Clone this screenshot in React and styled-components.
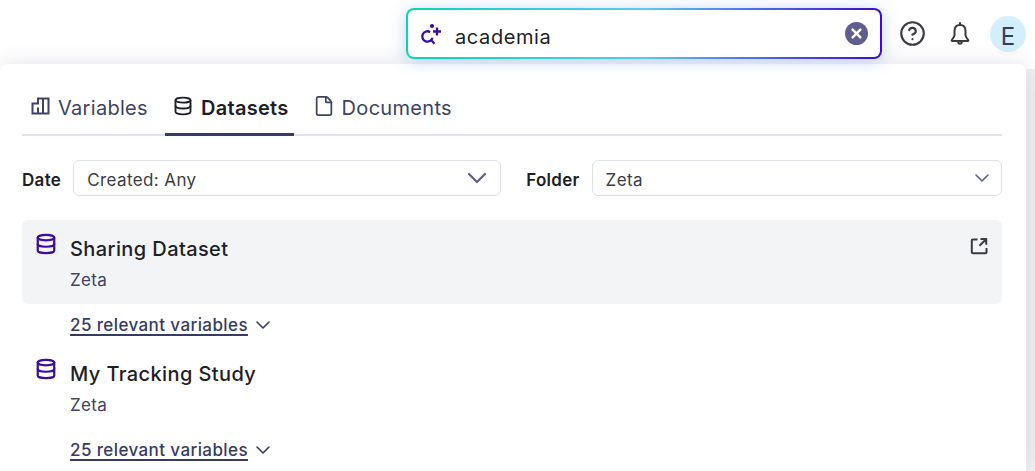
import React from 'react'
import styled, { createGlobalStyle } from 'styled-components'
import { HelpCircle, ChevronDown, Database, File } from 'lucide-react'

const GlobalStyle = createGlobalStyle`
	html, body {
		margin: 0;
		padding: 0;
		height: 100%;
		overflow: hidden;
		background: #ffffff;
		font-family: Inter, "Liberation Sans", sans-serif;
	}
`

const VariablesIcon = () => (
	<svg width="20" height="20" viewBox="0 0 20 20" fill="none" stroke="currentColor" strokeWidth="2">
		<path d="M2.5 17.5V7.5H8V2.5H18.5V17.5Z" />
		<path d="M13 2.5V17.5M8 11.5V17.5" />
	</svg>
)

const SparkSearchIcon = () => (
	<svg width="24" height="24" viewBox="0 0 24 24" fill="none" stroke="#3a0ca3" strokeWidth="2.3">
		<path d="M10.1 10A5.2 5.2 0 1 0 12.5 15.8" />
		<path d="M11.3 18.3l3.2 3.4" />
		<path d="M17 5.5v8M13 9.5h8" />
		<circle cx="12" cy="4" r="2.1" fill="#3a0ca3" stroke="none" />
	</svg>
)

const BellIcon = () => (
	<svg width="24" height="24" viewBox="0 0 24 24" fill="none" stroke="#3a3a3f" strokeWidth="2" strokeLinecap="round" strokeLinejoin="round">
		<path d="M12 1v2" />
		<path d="M12 3c-3.6 0-5.5 2.6-5.5 6v4c0 1.8-1.6 3.2-2.8 5.2-.2.4 0 .8.5.8h15.6c.5 0 .7-.4.5-.8-1.2-2-2.8-3.4-2.8-5.2V9c0-3.4-1.9-6-5.5-6z" />
		<path d="M10 19.5c.3 1.5 1 2.2 2 2.2s1.7-.7 2-2.2" />
	</svg>
)

const OpenIcon = () => (
	<svg width="18" height="18" viewBox="0 0 18 18" fill="none" stroke="currentColor" strokeWidth="2">
		<path d="M7.5 2.5H2.8a1 1 0 0 0-1 1V15.2a1 1 0 0 0 1 1H15.5a1 1 0 0 0 1-1V11" />
		<path d="M10.5 2H16.2V7.7M16 2.2L9.5 8.7" />
	</svg>
)

const ResultItem = ({ title, highlighted }) => (
	<section>
		<ResultCard $highlighted={highlighted}>
			<ResultIcon>
				<Database size={22} strokeWidth={2.4} />
			</ResultIcon>
			<ResultBody>
				<ResultTitle>{title}</ResultTitle>
				<ResultFolder>Zeta</ResultFolder>
			</ResultBody>
			{highlighted && (
				<OpenLink>
					<OpenIcon />
				</OpenLink>
			)}
		</ResultCard>
		<RelevantRow>
			<RelevantLink>25 relevant variables</RelevantLink>
			<ChevronDown size={24} strokeWidth={1.6} />
		</RelevantRow>
	</section>
)

const App = () => {
	return (
		<Page>
			<GlobalStyle />
			<Header>
				<SearchBorder>
					<SearchBox>
						<SparkSearchIcon />
						<SearchText>academia</SearchText>
						<ClearButton>
							<svg width="11" height="11" viewBox="0 0 10 10" stroke="#fff" strokeWidth="2.2" strokeLinecap="round">
								<path d="M1.5 1.5l7 7M8.5 1.5l-7 7" />
							</svg>
						</ClearButton>
					</SearchBox>
				</SearchBorder>
				<HeaderIcon>
					<HelpCircle size={27} strokeWidth={1.9} />
				</HeaderIcon>
				<HeaderIcon>
					<BellIcon />
				</HeaderIcon>
				<Avatar>E</Avatar>
			</Header>

			<Content>
				<Panel>
					<Tabs>
						<Tab>
							<VariablesIcon />
							Variables
						</Tab>
						<Tab $active>
							<Database size={20} strokeWidth={2.2} />
							Datasets
						</Tab>
						<Tab>
							<DocumentIcon size={22} strokeWidth={1.9} />
							Documents
						</Tab>
					</Tabs>

					<Filters>
						<FilterLabel>Date</FilterLabel>
						<DateSelect>
							<SelectValue>Created: Any</SelectValue>
							<ChevronDown size={32} strokeWidth={1.6} />
						</DateSelect>
						<FilterLabel>Folder</FilterLabel>
						<FolderSelect>
							<SelectValue>Zeta</SelectValue>
							<ChevronDown size={24} strokeWidth={1.6} />
						</FolderSelect>
					</Filters>

					<ResultItem title="Sharing Dataset" highlighted />
					<ResultItem title="My Tracking Study" />
				</Panel>
				<ScrollTrack />
			</Content>
		</Page>
	)
}

const Page = styled.div`
	width: 1035px;
	height: 471px;
	overflow: hidden;
	display: flex;
	flex-direction: column;
	background: #ffffff;
`

const Header = styled.header`
	height: 64px;
	flex-shrink: 0;
	display: flex;
	align-items: flex-start;
	padding: 8px 9px 0 406px;
	box-sizing: border-box;
`

const SearchBorder = styled.div`
	width: 476px;
	height: 51px;
	margin-right: 6px;
	box-sizing: border-box;
	padding: 2px;
	border-radius: 8px;
	background: linear-gradient(90deg, #06d6b0 0%, #5cc8f5 50%, #3a0ccf 100%);
	box-shadow: 0 2px 16px rgba(80, 130, 230, 0.35);
	position: relative;
	z-index: 2;
`

const SearchBox = styled.div`
	height: 100%;
	display: flex;
	align-items: center;
	padding: 0 12px;
	border-radius: 6px;
	background: #ffffff;
`

const SearchText = styled.span`
	flex: 1;
	margin-left: 11px;
	padding-top: 6px;
	font-size: 20px;
	letter-spacing: 0.6px;
	color: #1d1e26;
`

const ClearButton = styled.div`
	width: 23px;
	height: 23px;
	border-radius: 50%;
	background: #5f5f8f;
	display: flex;
	align-items: center;
	justify-content: center;
`

const HeaderIcon = styled.div`
	width: 48px;
	height: 51px;
	display: flex;
	align-items: center;
	justify-content: center;
	color: #3a3a3f;
`

const Avatar = styled.div`
	width: 36px;
	height: 36px;
	margin: 8px 0 0 6px;
	padding-top: 4px;
	box-sizing: border-box;
	border-radius: 50%;
	background: #d3eefd;
	color: #35395f;
	font-size: 24px;
	display: flex;
	align-items: center;
	justify-content: center;
`

const Content = styled.div`
	flex: 1;
	display: flex;
	min-height: 0;
`

const Panel = styled.main`
	width: 1026px;
	flex-shrink: 0;
	box-sizing: border-box;
	padding: 20px 24px 0 22px;
	background: #ffffff;
	border-radius: 8px 8px 0 0;
	box-shadow: 0 0 22px rgba(50, 50, 90, 0.14);
	position: relative;
`

const ScrollTrack = styled.div`
	flex: 1;
	margin-top: 5px;
	background: #f1f1f3;
`

const Tabs = styled.nav`
	display: flex;
	height: 52px;
	box-sizing: border-box;
	border-bottom: 2px solid #e2e2ea;
`

const Tab = styled.div`
	height: 52px;
	box-sizing: border-box;
	padding: 0 5px 1px 8px;
	margin-right: 12px;
	display: flex;
	align-items: center;
	gap: 8px;
	font-size: 20px;
	letter-spacing: 0.3px;
	font-weight: ${(p) => (p.$active ? 600 : 400)};
	color: ${(p) => (p.$active ? '#1d1e26' : '#3d4266')};
	border-bottom: 3px solid ${(p) => (p.$active ? '#363b63' : 'transparent')};

	svg {
		margin-top: -4px;
		flex-shrink: 0;
	}
`

const DocumentIcon = styled(File)`
	&& {
		margin: -4px -1px 0 -1px;
	}
`

const Filters = styled.div`
	display: flex;
	align-items: center;
	margin: 24px 0;
`

const FilterLabel = styled.label`
	font-size: 17px;
	font-weight: 600;
	letter-spacing: 0.3px;
	color: #1d1e26;
	padding-top: 4px;
	margin-right: 12px;
`

const DateSelect = styled.div`
	width: 428px;
	height: 36px;
	margin-right: 25px;
	box-sizing: border-box;
	display: flex;
	align-items: center;
	justify-content: space-between;
	padding: 0 7px 0 13px;
	background: #ffffff;
	border: 1px solid #dfdfe8;
	border-radius: 6px;
	color: #5a5f8a;
`

const FolderSelect = styled(DateSelect)`
	width: 410px;
	margin-right: 0;
`

const SelectValue = styled.span`
	font-size: 17px;
	letter-spacing: 0.4px;
	color: #3b3b44;
	padding-top: 4px;
`

const ResultCard = styled.div`
	display: flex;
	align-items: flex-start;
	height: 84px;
	box-sizing: border-box;
	padding: 13px 14px 0 13px;
	border-radius: 6px;
	background: ${(p) => (p.$highlighted ? '#f3f4f6' : 'transparent')};
`

const ResultIcon = styled.div`
	width: 22px;
	height: 22px;
	color: #3a0ca3;
`

const ResultBody = styled.div`
	flex: 1;
	margin: 2px 0 0 13px;
`

const ResultTitle = styled.h3`
	margin: 0;
	font-size: 20px;
	font-weight: 500;
	letter-spacing: 0.4px;
	line-height: 28px;
	color: #1d1e26;
`

const ResultFolder = styled.div`
	margin-top: 6px;
	font-size: 17px;
	letter-spacing: 0.3px;
	line-height: 22px;
	color: #3d4266;
`

const OpenLink = styled.div`
	color: #3a3a3f;
	margin-top: 4px;
`

const RelevantRow = styled.div`
	display: flex;
	align-items: center;
	gap: 3px;
	height: 41px;
	box-sizing: border-box;
	padding: 0 0 0 48px;
	color: #363b63;
`

const RelevantLink = styled.a`
	font-size: 17px;
	font-weight: 500;
	letter-spacing: 0.4px;
	text-decoration: underline;
	text-decoration-thickness: 1.5px;
	text-underline-offset: 3px;
`

export default App
